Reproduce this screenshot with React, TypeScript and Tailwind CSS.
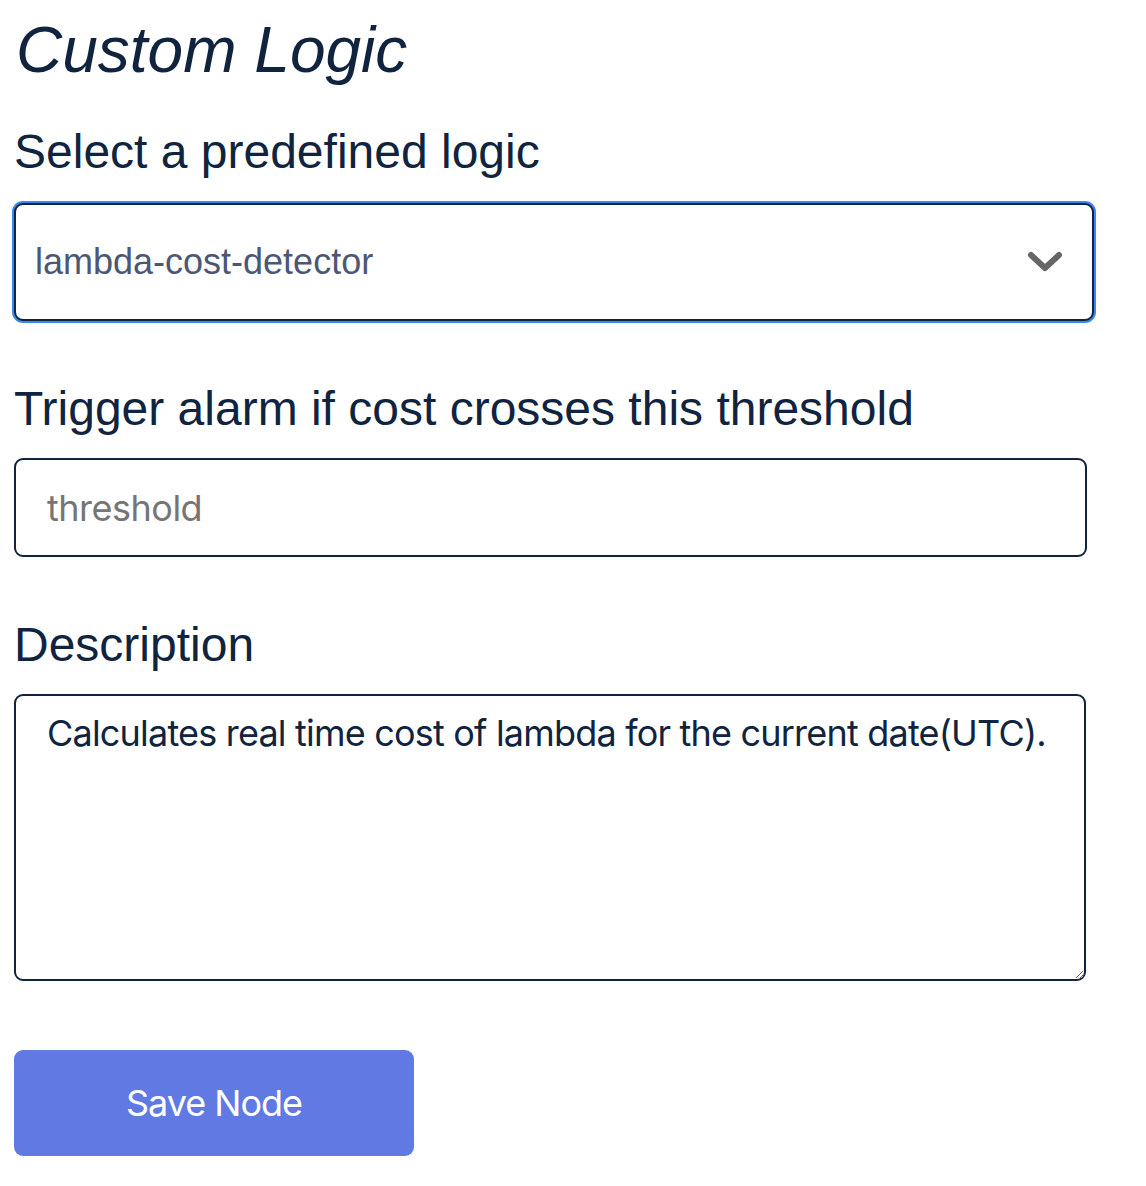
import { useState } from "react"

const ink = "text-[#10243f]"

function Chevron() {
  return (
    <svg
      className="pointer-events-none absolute right-[31px] top-1/2 -translate-y-1/2"
      width="36"
      height="24"
      viewBox="0 0 36 24"
    >
      <path d="M4 5 L18 18 L32 5" fill="none" stroke="#666666" strokeWidth="6" strokeLinecap="round" strokeLinejoin="round" />
    </svg>
  )
}

export default function App() {
  const [logic, setLogic] = useState("lambda-cost-detector")
  const [threshold, setThreshold] = useState("")
  const [description, setDescription] = useState(
    "Calculates real time cost of lambda for the current date(UTC)."
  )

  return (
    <div className={`min-h-screen bg-white pl-[14px] pt-[14px] ${ink}`} style={{ fontFamily: "'Liberation Sans', Arial, sans-serif" }}>
      <h1 className="text-[64px] leading-[72px] italic font-normal pl-[2px]">Custom Logic</h1>

      {/* Predefined logic */}
      <label className="block mt-[38px] text-[48px] leading-[56px]">Select a predefined logic</label>
      <div className="relative mt-[23px] w-[1080px]">
        <select
          value={logic}
          onChange={(e) => setLogic(e.target.value)}
          className="block w-full h-[118px] appearance-none rounded-[9px] border-2 border-[#10243f] bg-white pl-[19px] pr-20 text-[36px] text-[#4b5875] outline-none ring-2 ring-[#3a87f0]"
        >
          <option value="lambda-cost-detector">lambda-cost-detector</option>
        </select>
        <Chevron />
      </div>

      {/* Threshold */}
      <label className="block mt-[60px] text-[48px] leading-[56px]">Trigger alarm if cost crosses this threshold</label>
      <input
        value={threshold}
        onChange={(e) => setThreshold(e.target.value)}
        placeholder="threshold"
        className="block mt-[21px] w-[1073px] h-[99px] rounded-[9px] border-2 border-[#10243f] bg-white px-[31px] text-[36px] tracking-[-0.5px] outline-none placeholder:text-[#757575]"
        style={{ fontFamily: "Inter, 'Noto Sans', sans-serif" }}
      />

      {/* Description */}
      <label className="block mt-[60px] text-[48px] leading-[56px]">Description</label>
      <textarea
        value={description}
        onChange={(e) => setDescription(e.target.value)}
        className="block mt-[21px] w-[1072px] h-[287px] rounded-[9px] border-2 border-[#10243f] bg-white px-[31px] pt-[15px] text-[36px] leading-[44px] tracking-[-0.8px] outline-none"
        style={{ fontFamily: "Inter, 'Noto Sans', sans-serif" }}
      />

      <button
        className="mt-[69px] flex h-[106px] w-[400px] items-center justify-center rounded-[9px] bg-[#6179e3] text-[36px] tracking-[-1px] text-white"
        style={{ fontFamily: "Inter, 'Noto Sans', sans-serif" }}
      >
        Save Node
      </button>
    </div>
  )
}
